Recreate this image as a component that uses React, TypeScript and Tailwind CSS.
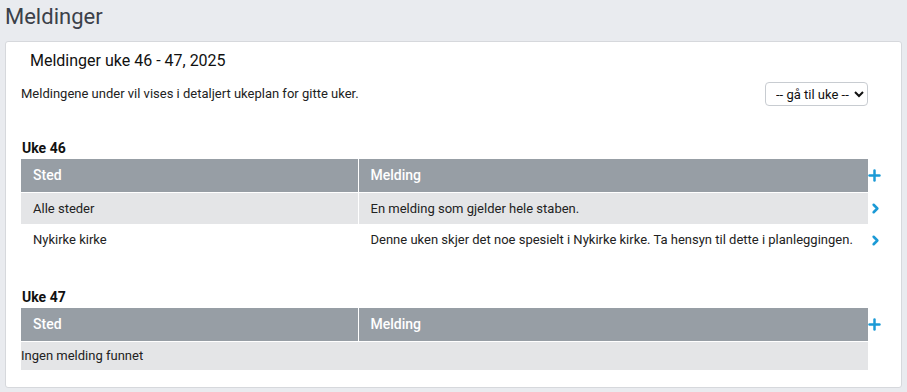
import { ChevronRight, Plus } from "lucide-react";

type Melding = { sted: string; tekst: string };

const uker: { uke: number; meldinger: Melding[] }[] = [
  {
    uke: 46,
    meldinger: [
      { sted: "Alle steder", tekst: "En melding som gjelder hele staben." },
      {
        sted: "Nykirke kirke",
        tekst: "Denne uken skjer det noe spesielt i Nykirke kirke. Ta hensyn til dette i planleggingen.",
      },
    ],
  },
  { uke: 47, meldinger: [] },
];

const UkeTabell = ({ uke, meldinger }: { uke: number; meldinger: Melding[] }) => (
  <div>
    <h3 className="text-[14px] font-bold leading-[17px] text-[#111] pl-[1px] mb-[2px]">Uke {uke}</h3>
    <table className="w-full table-fixed border-collapse text-[13px]">
      <colgroup>
        <col className="w-[337px]" />
        <col />
        <col className="w-[18px]" />
      </colgroup>
      <thead>
        <tr className="h-[33px]">
          <th className="bg-[#979ea5] text-white text-left font-medium text-[14px] px-3 border-r border-b border-white">
            Sted
          </th>
          <th className="bg-[#979ea5] text-white text-left font-medium text-[14px] px-3 border-b border-white">
            Melding
          </th>
          <th className="text-left">
            <Plus size={17} strokeWidth={3.5} className="text-[#1b9ad6] -ml-[2px]" />
          </th>
        </tr>
      </thead>
      <tbody>
        {meldinger.length === 0 ? (
          <tr className="h-[29px]">
            <td colSpan={2} className="bg-[#e4e5e7] text-[#222]">
              Ingen melding funnet
            </td>
            <td />
          </tr>
        ) : (
          meldinger.map((m, i) => (
            <tr key={m.sted} className="h-[32px]">
              <td className={`px-3 text-[#222] border-r border-white ${i % 2 === 0 ? "bg-[#e4e5e7]" : ""}`}>
                {m.sted}
              </td>
              <td className={`px-3 text-[#222] whitespace-nowrap ${i % 2 === 0 ? "bg-[#e4e5e7]" : ""}`}>
                {m.tekst}
              </td>
              <td>
                <ChevronRight size={15} strokeWidth={4} className="text-[#1b9ad6]" />
              </td>
            </tr>
          ))
        )}
      </tbody>
    </table>
  </div>
);

export default function App() {
  return (
    <div className="min-h-screen bg-[#e9ebef] px-[5px] pb-[5px] text-[#222]" style={{ fontFamily: "Roboto, 'Liberation Sans', sans-serif" }}>
      <h1 className="text-[22px] leading-[26px] pt-[4px] pb-[11px] text-[#3b4049]">Meldinger</h1>
      <div className="bg-white border border-[#d6d8dc] rounded-[3px] pl-[15px] pr-[15px] pt-[9px] pb-[17px]">
        <h2 className="text-[16px] leading-[19px] pl-[9px] text-[#111]">Meldinger uke 46 - 47, 2025</h2>
        <div className="flex items-center justify-between mt-[12px] pr-[18px]">
          <p className="text-[13px] leading-[16px]">Meldingene under vil vises i detaljert ukeplan for gitte uker.</p>
          <select className="h-[24px] w-[103px] border border-[#c8ccd1] rounded-[4px] bg-white text-[13px] pl-[6px] text-[#111]">
            <option>-- gå til uke --</option>
          </select>
        </div>
        <div className="mt-[34px] flex flex-col gap-[33px]">
          {uker.map((u) => (
            <UkeTabell key={u.uke} uke={u.uke} meldinger={u.meldinger} />
          ))}
        </div>
      </div>
    </div>
  );
}
